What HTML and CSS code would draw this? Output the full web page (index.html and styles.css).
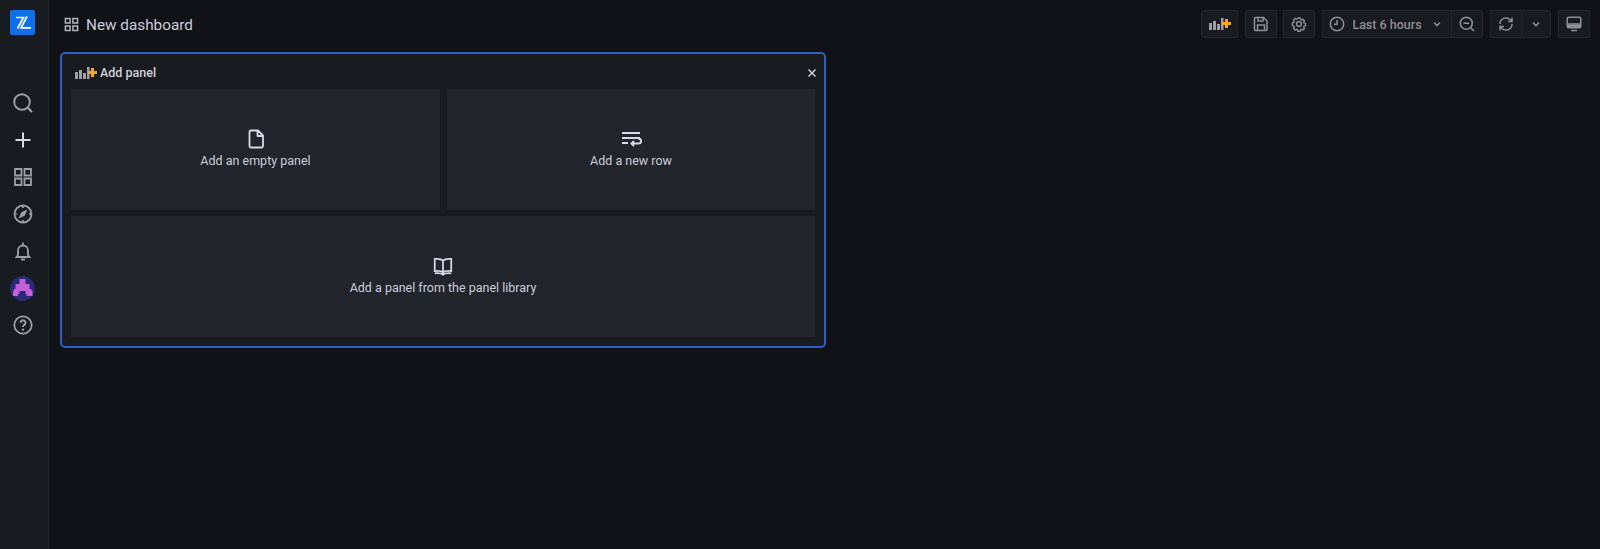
FILE: index.html
```html
<!DOCTYPE html>
<html lang="en">
<head>
<meta charset="utf-8">
<title>New dashboard</title>
<link rel="stylesheet" href="styles.css">
</head>
<body>
<div class="app">
  <nav class="sidebar">
    <div class="logo">
      <svg viewBox="0 0 25 25" width="25" height="25"><rect width="25" height="25" rx="2" fill="#0f6fe8"/><path d="M6 7.500h7.500L7.500 18.500M17 6.500L11 17.800H21" fill="none" stroke="#fff" stroke-width="1.700"/></svg>
    </div>
    <div class="nav-items">
      <svg class="nav-icon" viewBox="0 0 24 24"><circle cx="11" cy="11" r="7.800" fill="none" stroke-width="1.900"/><path d="M16.800 16.800l4.200 4.200" fill="none" stroke-width="2.200"/></svg>
      <svg class="nav-icon plus" viewBox="0 0 24 24"><path d="M12 4.500v15M4.500 12h15" fill="none" stroke-width="2"/></svg>
      <svg class="nav-icon" viewBox="0 0 24 24"><path d="M4 4h6.500v6.500H4zM13.500 4H20v6.500h-6.500zM4 13.500h6.500V20H4zM13.500 13.500H20V20h-6.500z" fill="none" stroke-width="1.800"/></svg>
      <svg class="nav-icon" viewBox="0 0 24 24"><circle cx="12" cy="12" r="8.500" fill="none" stroke-width="1.800"/><path d="M16.500 7.500l-2.800 6.200-6.200 2.800 2.800-6.200z" fill="#9d9ea6" stroke="none"/><path d="M12 3.500v2.500M12 18v2.500M3.500 12H6M18 12h2.500" stroke-width="1.700"/></svg>
      <svg class="nav-icon" viewBox="0 0 24 24"><path d="M7 16v-4.500a5 5 0 0 1 10 0V16l1.500 2h-13zM12 3.500v3M10 20.500h4" fill="none" stroke-width="1.800"/></svg>
      <svg class="avatar" viewBox="0 0 25 25"><circle cx="12.500" cy="12.500" r="12.500" fill="#2b2a78"/><path d="M9.500 3h6v5h4v5h2v2h1v5h-6v-2h-1v-3h-6v3H8v2H3v-5h1v-2h1.500V8h4z" fill="#c65fd8"/></svg>
      <svg class="nav-icon" viewBox="0 0 24 24"><circle cx="12" cy="12" r="8.700" fill="none" stroke-width="1.800"/><path d="M9.500 9.800a2.500 2.500 0 1 1 3.800 2.100c-.9.600-1.300 1-1.300 2" fill="none" stroke-width="1.900"/><circle class="dot" cx="12" cy="16.600" r="1.200"/></svg>
    </div>
  </nav>
  <main class="main">
    <header class="topbar">
      <div class="title">
        <svg class="title-icon" viewBox="0 0 16 16"><path d="M1.500 1.500h5v5h-5zM9.500 1.500h5v5h-5zM1.500 9.500h5v5h-5zM9.500 9.500h5v5h-5z" fill="none" stroke-width="1.600"/></svg>
        <span class="title-text">New dashboard</span>
      </div>
      <div class="tools">
        <button class="tool add-tool">
          <svg viewBox="0 0 22 12" width="22" height="12"><path class="bars" d="M0 5h3v7H0zM4 3h3v9H4zM8 6h3v6H8zM12 0h2.500v12H12z"/><path class="orange" d="M16 1h3v3h3v3h-3v3h-3V7h-3V4h3z"/></svg>
        </button>
        <button class="tool icon-tool">
          <svg viewBox="0 0 16 16" width="16" height="16"><path d="M2.500 1.500h8l3.500 3.500v8.500a1 1 0 0 1-1 1h-10.500a1 1 0 0 1-1-1v-11a1 1 0 0 1 1-1zM5 1.500V5h5V1.500M4.500 14.500V9h7v5.500" fill="none" stroke-width="1.500"/></svg>
        </button>
        <button class="tool icon-tool tight">
          <svg viewBox="0 0 16 16" width="16" height="16"><circle cx="8" cy="8" r="2.400" fill="none" stroke-width="1.500"/><path d="M6.700 1.500h2.600l.4 1.700 1.200.5 1.500-.9 1.800 1.800-.9 1.500.5 1.200 1.700.4v2.600l-1.700.4-.5 1.200.9 1.500-1.800 1.800-1.500-.9-1.200.5-.4 1.700H6.700l-.4-1.700-1.200-.5-1.500.9-1.800-1.800.9-1.500-.5-1.200-1.700-.4V6.900l1.700-.4.500-1.200-.9-1.500 1.800-1.800 1.500.9 1.200-.5z" transform="translate(8 8) scale(.88) translate(-8 -8.300)" fill="none" stroke-width="1.500"/></svg>
        </button>
        <div class="group">
          <button class="seg time">
            <svg viewBox="0 0 16 16" width="16" height="16"><circle cx="8" cy="8" r="6.700" fill="none" stroke-width="1.500"/><path d="M8 4v4.300H5" fill="none" stroke-width="1.500"/></svg>
            <span class="time-label">Last 6 hours</span>
            <svg class="chev" viewBox="0 0 16 16" width="16" height="16"><path d="M5 6.500l3 3 3-3" fill="none" stroke-width="1.600"/></svg>
          </button>
          <button class="seg zoom">
            <svg viewBox="0 0 16 16" width="16" height="16"><circle cx="7.300" cy="7.300" r="6" fill="none" stroke-width="1.600"/><path d="M4.500 7.300h5.600M11.700 11.700l3.300 3.300" fill="none" stroke-width="1.600"/></svg>
          </button>
        </div>
        <div class="group">
          <button class="seg zoom">
            <svg viewBox="0 0 16 16" width="16" height="16"><path d="M2 8a6 6 0 0 1 10.300-4.200L14 5.500M14 1.500v4h-4M14 8a6 6 0 0 1-10.300 4.200L2 10.500M2 14.500v-4h4" fill="none" stroke-width="1.500"/></svg>
          </button>
          <button class="seg caret">
            <svg class="chev" viewBox="0 0 16 16" width="16" height="16"><path d="M5 6.500l3 3 3-3" fill="none" stroke-width="1.600"/></svg>
          </button>
        </div>
        <button class="tool icon-tool">
          <svg viewBox="0 0 16 16" width="16" height="16"><rect x="1.200" y="1.200" width="13.600" height="10.600" rx="1.500" fill="none" stroke-width="1.500"/><path d="M1.500 8h13M5 14.500h6" fill="none" stroke-width="1.600"/><path d="M2 8.500h12v3H2z" fill="#8e8f98" stroke="none"/></svg>
        </button>
      </div>
    </header>
    <section class="panel">
      <div class="panel-head">
        <div class="panel-title">
          <svg viewBox="0 0 22 12" width="22" height="12"><path class="bars" d="M0 5h3v7H0zM4 3h3v9H4zM8 6h3v6H8zM12 0h2.500v12H12z"/><path class="orange" d="M16 1h3v3h3v3h-3v3h-3V7h-3V4h3z"/></svg>
          <span>Add panel</span>
        </div>
        <svg class="close" viewBox="0 0 12 12" width="12" height="12"><path d="M2.500 2.500l7 7M9.500 2.500l-7 7" fill="none" stroke-width="1.400"/></svg>
      </div>
      <div class="tiles">
        <div class="tile">
          <svg viewBox="0 0 24 24" width="24" height="24"><path d="M6.500 3.500h7l5 5v10.500a1.500 1.500 0 0 1-1.500 1.500h-10.500a1.500 1.500 0 0 1-1.500-1.500V5a1.500 1.500 0 0 1 1.500-1.500zM13 3.500V9h5.500" fill="none" stroke-width="1.800" stroke-linejoin="round" transform="translate(.5 0)"/></svg>
          <span>Add an empty panel</span>
        </div>
        <div class="tile">
          <svg viewBox="0 0 24 24" width="24" height="24"><path d="M3 6h18M3 11h18M3 16h6M19 11.500h.5a2.500 2.500 0 0 1 0 5H13M15 14l-2.500 2.500L15 19" fill="none" stroke-width="2"/></svg>
          <span>Add a new row</span>
        </div>
        <div class="tile wide">
          <svg viewBox="0 0 24 24" width="22" height="22"><path d="M12 6.500C10.500 4.500 7 4 3 4.300v13.200c4-.3 7.500 0 9 1.500 1.500-1.500 5-1.800 9-1.500V4.300C17 4 13.500 4.500 12 6.500zM12 6.500V19M3 20c4-.3 7.500 0 9 1.500 1.500-1.500 5-1.800 9-1.500" fill="none" stroke-width="1.900"/></svg>
          <span>Add a panel from the panel library</span>
        </div>
      </div>
    </section>
  </main>
</div>
</body>
</html>
```
FILE: styles.css
```css
* { box-sizing: border-box; }
html, body { margin: 0; height: 100%; }
body {
  background: #111217;
  color: #ccccdc;
  font-family: Roboto, "Liberation Sans", sans-serif;
  overflow: hidden;
}
.app { display: flex; height: 549px; }
.sidebar {
  width: 49px;
  flex: none;
  background: #181b1f;
  border-right: 1px solid #24272c;
  display: flex;
  flex-direction: column;
  align-items: center;
  padding-top: 10px;
}
.logo { width: 25px; height: 25px; margin-left: -3px; margin-bottom: 56px; }
.logo svg { display: block; }
.nav-items {
  display: flex;
  flex-direction: column;
  align-items: center;
  gap: 13px;
  margin-left: -3px;
}
.nav-icon {
  display: block;
  width: 24px;
  height: 24px;
  stroke: #9d9ea6;
  fill: none;
}
.nav-icon.plus { stroke: #d8d9e2; }
.dot { fill: #9d9ea6; stroke: none; }
.avatar { display: block; width: 25px; height: 25px; margin-bottom: -1px; }
.main { flex: 1; min-width: 0; padding-left: 11px; padding-right: 10px; }
.topbar {
  display: flex;
  justify-content: space-between;
  align-items: center;
  height: 48px;
}
.title { display: flex; align-items: center; gap: 7px; margin-left: 4px; padding-top: 1px; }
.title-icon { width: 15px; height: 15px; stroke: #b4b5bf; }
.title-text { font-size: 15.3px; color: #ccccdc; }
.tools { display: flex; align-items: center; gap: 7px; }
.tool, .group {
  height: 28px;
  background: #181b1f;
  border: 1px solid #24272c;
  border-radius: 2px;
}
.tool, .seg {
  padding: 0;
  display: flex;
  align-items: center;
  justify-content: center;
  font: inherit;
  color: inherit;
  stroke: #8e8f98;
  fill: none;
}
.add-tool { width: 37px; }
.icon-tool { width: 32px; }
.tight { margin-left: -1px; }
.group { display: flex; }
.seg { background: none; border: 0; height: 26px; }
.time {
  width: 129px;
  gap: 7px;
  border-right: 1px solid #24272c;
}
.time-label { font-size: 12.5px; font-weight: 500; color: #8d8f99; white-space: nowrap; }
.zoom { width: 30px; }
.caret { width: 29px; border-left: 1px solid #24272c; }
.chev { stroke: #8e8f98; }
.bars { fill: #9d9ea6; stroke: none; }
.orange { fill: #f5a623; stroke: none; }
.panel {
  width: 766px;
  height: 296px;
  margin-top: 4px;
  background: #181b1f;
  border: 2px solid #2c5fc4;
  border-radius: 5px;
  padding: 0 10px 9px 9px;
}
.panel-head {
  height: 35px;
  display: flex;
  align-items: center;
  justify-content: space-between;
  padding-left: 4px;
  padding-top: 2px;
}
.panel-title {
  display: flex;
  align-items: center;
  gap: 3px;
  font-size: 12.5px;
  font-weight: 500;
  color: #d0d0dc;
}
.close { stroke: #d8d9e2; margin-right: -4px; }
.tiles {
  display: grid;
  grid-template-columns: 369px 368px;
  grid-template-rows: 121px 121px;
  gap: 6px 7px;
}
.tile {
  background: #22252b;
  display: flex;
  flex-direction: column;
  align-items: center;
  justify-content: center;
  gap: 2px;
  font-size: 12.5px;
  color: #ccccdc;
  stroke: #d8d9e2;
  padding-bottom: 4px;
}
.tile.wide { grid-column: 1 / -1; gap: 3px; }
```
